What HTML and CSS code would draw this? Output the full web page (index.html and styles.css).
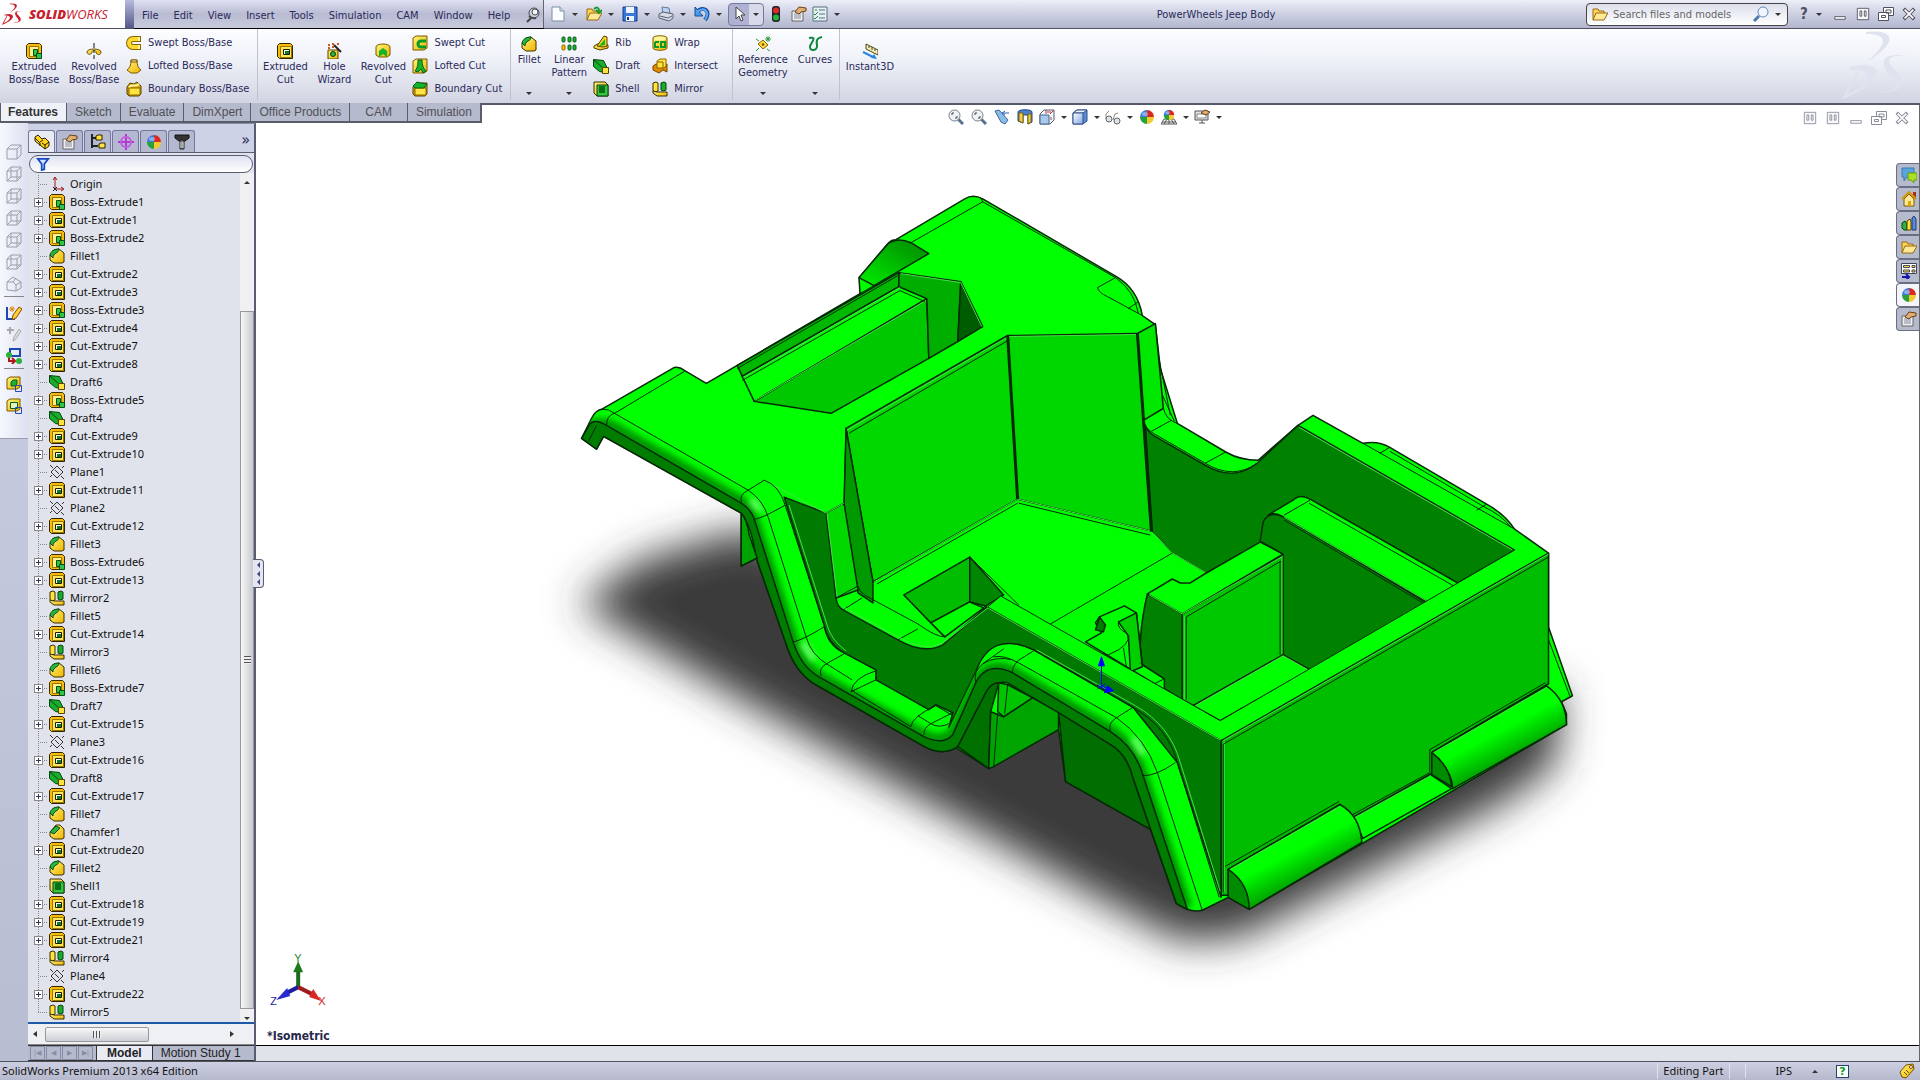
FILE: index.html
```html
<!DOCTYPE html>
<html lang="en">
<head>
<meta charset="utf-8">
<title>PowerWheels Jeep Body</title>
<link rel="stylesheet" href="styles.css">
<script src="tree.js" defer></script>
</head>
<body>
<svg class="defs" aria-hidden="true">
<defs>
<linearGradient id="gold" x1="0" y1="0" x2="1" y2="1"><stop offset="0" stop-color="#fff47a"/><stop offset="1" stop-color="#f0b400"/></linearGradient>
<linearGradient id="glass" x1="0" y1="0" x2="1" y2="1"><stop offset="0" stop-color="#fff"/><stop offset="1" stop-color="#7ea6e0"/></linearGradient>
</defs>
<symbol id="boss" viewBox="0 0 16 16"><path d="M.500 2.500l2-2h11l2 2v11h-2v2h-11l-2-2z" fill="#f4bc10" stroke="#3a2e00"/><path d="M3.500 3.500h9v10h-9z" fill="#fff28a" stroke="#9a7400"/><path d="M7.500 6.500h4v4h4v5h-5v-3h-3z" fill="#2fc44a" stroke="#064d10"/><path d="M10.500 15v-4.500h5" fill="none" stroke="#064d10"/></symbol>
<symbol id="cut" viewBox="0 0 16 16"><path d="M.500 2.500l2-2h11l2 2v13h-13l-2-2z" fill="#f8bc08" stroke="#2e2400"/><path d="M3.500 3.500h11v11h-11z" fill="#ffe75a" stroke="#9a7400"/><path d="M6.500 6.500h6v5h-6z" fill="#fff" stroke="#1a1a00"/><path d="M8 8h4v3H8z" fill="#0a7a24"/></symbol>
<symbol id="fillet" viewBox="0 0 16 16"><path d="M1 7l4-5 5-1 5 4v9l-2 1H5l-4-3z" fill="url(#gold)" stroke="#3a2e00"/><path d="M1 7c1-4 4-6 9-6 0 2-1 3-3 4-2 1-3 3-3 5z" fill="#2ab540" stroke="#064d10"/></symbol>
<symbol id="chamfer" viewBox="0 0 16 16"><path d="M1 8l6-7h4l4 4v9l-2 1H5l-4-3z" fill="url(#gold)" stroke="#3a2e00"/><path d="M1 8l6-6 4 2-6 6z" fill="#2ab540" stroke="#064d10"/></symbol>
<symbol id="draft" viewBox="0 0 16 16"><path d="M.500 1.500l10 1 4 8-3 4-5-1-6-5z" fill="#18ae2c" stroke="#06400e"/><path d="M1 2l9 8" stroke="#06400e"/><path d="M9.500 9.500h6v6h-6z" fill="#ffe23c" stroke="#5a4400"/></symbol>
<symbol id="mirror" viewBox="0 0 16 16"><path d="M1 2l3-1 2 1v8l-3 1-2-1z" fill="#ffe23c" stroke="#3a2e00"/><path d="M9 2l3-1 2 1v7l-3 1-2-1z" fill="#18ae2c" stroke="#06400e"/><path d="M1 10l4 1h10v4H5l-4-3z" fill="url(#gold)" stroke="#3a2e00"/></symbol>
<symbol id="plane" viewBox="0 0 16 16"><path d="M2 8l6-6 6 6-6 6zM1 1l3 3M6 6l4 4M12 12l3 3M1 13l2-2M13 4l2-2" fill="none" stroke="#333"/></symbol>
<symbol id="shell" viewBox="0 0 16 16"><path d="M1 1h11l3 3v11H4l-3-3z" fill="url(#gold)" stroke="#3a2e00"/><path d="M4 4h11v11H4z" fill="#35c640" stroke="#06400e"/><path d="M6 5h6v7H6z" fill="#0b6f18"/></symbol>
<symbol id="origin" viewBox="0 0 16 16"><path d="M6 13V2M4 4l2-3 2 3M6 13h8M12 11l3 2-3 2" fill="none" stroke="#a01818"/><path d="M4 11l4 4M8 11l-4 4" stroke="#222"/></symbol>
<symbol id="revolve" viewBox="0 0 16 16"><path d="M1 9c0-4 14-4 14 0s-5 3-5 0c0-2-4-2-4 0 0 3-5 3-5 0z" fill="url(#gold)" stroke="#6b5200"/><path d="M8 0v5M8 7v3M8 12v4" stroke="#111"/></symbol>
<symbol id="swept" viewBox="0 0 16 16"><path d="M15 4H7a4 4 0 0 0 0 8h8" fill="none" stroke="#8a6400" stroke-width="6"/><path d="M14 4H7a4 4 0 0 0 0 8h7" fill="none" stroke="#ffd92e" stroke-width="4"/><path d="M13 2v4M13 10v4" stroke="#fff6a0" stroke-width="2"/></symbol>
<symbol id="loft" viewBox="0 0 16 16"><path d="M5 2h6c0 5 1 8 4 10l-4 3H5l-4-3c3-2 4-5 4-10z" fill="url(#gold)" stroke="#7a5800"/><path d="M5 2h6v2H5z" fill="#fff6a0" stroke="#7a5800"/></symbol>
<symbol id="bound" viewBox="0 0 16 16"><path d="M1 6l3-4 4 1 3-2 4 4v8l-2 2H3l-2-2z" fill="#d9a200" stroke="#5a4200"/><path d="M3 7h11v7H3z" fill="#ffe542" stroke="#8a6400"/><path d="M3 6c4-4 6 1 10-3" fill="none" stroke="#fff6a0" stroke-width="2"/></symbol>
<symbol id="wizard" viewBox="0 0 16 16"><path d="M2 7h10v9H2z" fill="url(#gold)" stroke="#5a4200"/><circle cx="7" cy="11" r="2.500" fill="#2ab540" stroke="#06400e"/><path d="M8 2l7 7" stroke="#222" stroke-width="2"/><path d="M2 2h2M6 1h2M11 1h2M2 5h2M6 4h2" stroke="#c85a20" stroke-width="2"/></symbol>
<symbol id="revcut" viewBox="0 0 16 16"><path d="M1 4c0-4 14-4 14 0v8l-3 2H4l-3-2z" fill="url(#gold)" stroke="#7a5800"/><path d="M4 14V8l4-3 4 3v6l-4-3z" fill="#14b428"/></symbol>
<symbol id="sweptcut" viewBox="0 0 16 16"><path d="M1 3l3-2h11v12l-3 2H1z" fill="url(#gold)" stroke="#7a5800"/><path d="M14 6H9a2 2 0 0 0 0 6h5" fill="none" stroke="#0a9c24" stroke-width="3"/></symbol>
<symbol id="loftcut" viewBox="0 0 16 16"><path d="M1 3l3-2h11v12l-3 2H1z" fill="url(#gold)" stroke="#7a5800"/><path d="M6 2h4c0 5 1 8 4 11l-3 2-2-4-3 3-3-1c3-4 3-7 3-11z" fill="#14b428" stroke="#06601a"/></symbol>
<symbol id="boundcut" viewBox="0 0 16 16"><path d="M1 6l3-4h11v11l-2 2H3l-2-2z" fill="#d9a200" stroke="#5a4200"/><path d="M3 7h11v7H3z" fill="#ffe542" stroke="#8a6400"/><path d="M1 5l4-4 4 1 6 1-3 4H3z" fill="#14b428" stroke="#06601a"/></symbol>
<symbol id="pattern" viewBox="0 0 16 16"><g stroke="#06601a"><g fill="#1faf35"><rect x="1" y="1" width="3" height="5" rx="1"/><rect x="7" y="1" width="3" height="5" rx="1"/><rect x="12" y="1" width="3" height="5" rx="1"/><rect x="7" y="9" width="3" height="5" rx="1"/><rect x="12" y="9" width="3" height="5" rx="1"/></g><rect x="1" y="9" width="3" height="5" rx="1" fill="#ffc400" stroke="#8a6400"/></g></symbol>
<symbol id="rib" viewBox="0 0 16 16"><path d="M1 11l7-4 7 3v3l-8 2-6-2z" fill="url(#gold)" stroke="#5a4200"/><path d="M4 11L11 1l3 1v9l-4 1z" fill="#ffd21e" stroke="#5a4200"/><path d="M6 11l6-7v6z" fill="#14b428"/></symbol>
<symbol id="wrap" viewBox="0 0 16 16"><path d="M1 3c0-3 14-3 14 0v10c0 3-14 3-14 0z" fill="url(#gold)" stroke="#7a5800"/><ellipse cx="8" cy="3.500" rx="6" ry="2" fill="#fff6a0"/><path d="M3 7h4M3 7v5h4M9 7h4v5H9z" fill="none" stroke="#0a9c24" stroke-width="2"/></symbol>
<symbol id="intersect" viewBox="0 0 16 16"><path d="M1 8l3-2 8 1 3-1v8l-4-2-4 3-6-3z" fill="#e08a00" stroke="#7a4200"/><path d="M5 3l3-2h6v7l-2 2H5z" fill="#ffe542" stroke="#8a6400"/><path d="M5 4h6v6" fill="none" stroke="#8a6400"/></symbol>
<symbol id="refgeo" viewBox="0 0 16 16"><path d="M3 8l5-4 5 5-5 4z" fill="#ffd83a" stroke="#8a6400"/><path d="M7 9l2-1" stroke="#6a4a00" stroke-width="2"/><path d="M1 3l3 2M12 13l3 2M1 15l3-3M13 0v6M10 3h6M11 1l4 4M15 1l-4 4" stroke="#2a9a3a" fill="none"/></symbol>
<symbol id="curves" viewBox="0 0 16 16"><path d="M2 2c9-2 2 5 1 8-1 6 8 5 7-1C9 4 10 2 15 1" fill="none" stroke="#0c8a3c" stroke-width="2"/></symbol>
<symbol id="instant" viewBox="0 0 16 16"><path d="M4 1l12 6v5L4 6z" fill="#f7eeb4" stroke="#4a4420"/><path d="M7 3v2M10 4v3M13 6v2" stroke="#4a4420"/><path d="M1 9l10 5" stroke="#2a86e0" stroke-width="2"/><path d="M9 15l6 1-3-5z" fill="#2a86e0"/></symbol>
<symbol id="new" viewBox="0 0 16 16"><path d="M2 1h8l4 4v10H2z" fill="#fbfdff" stroke="#7890a8"/><path d="M10 1v4h4" fill="#d4e0ec" stroke="#7890a8"/></symbol>
<symbol id="folder" viewBox="0 0 16 16"><path d="M1 14V3h5l1 2h5v2" fill="#ffd35a" stroke="#9a6a10"/><path d="M1 14L4 7h12l-4 7z" fill="#ffe896" stroke="#9a6a10"/></symbol>
<symbol id="open" viewBox="0 0 16 16"><use href="#folder"/><path d="M8 3c3-3 5-1 5 2M10 4l3 3 3-3" fill="none" stroke="#1c9a2c" stroke-width="2"/></symbol>
<symbol id="save" viewBox="0 0 16 16"><path d="M1 1h14v14H1z" fill="#3a78d8" stroke="#123a88"/><path d="M4 1h8v6H4zM4 10h8v5H4z" fill="#eef4ff"/><path d="M6 11v3" stroke="#123a88" stroke-width="2"/></symbol>
<symbol id="print" viewBox="0 0 16 16"><path d="M4 1l7 1 1 5-7 1z" fill="#b8d4f4" stroke="#6a7a94"/><path d="M1 8l4-2 10 2v4l-4 3-10-3z" fill="#d8dae4" stroke="#5a5e70"/><path d="M2 10l8 2 4-2" fill="none" stroke="#5a5e70"/></symbol>
<symbol id="undo" viewBox="0 0 16 16"><path d="M3 6c6-7 15-1 8 8" fill="none" stroke="#1a4a9a" stroke-width="4"/><path d="M1 1v9h8z" fill="#4a9aea" stroke="#1a4a9a"/><path d="M3 6c6-6 14-1 8 8" fill="none" stroke="#5aaaf4" stroke-width="2"/></symbol>
<symbol id="select" viewBox="0 0 16 16"><path d="M5 1v12l3-3 2 5 2-1-2-5h4z" fill="#fff" stroke="#444"/></symbol>
<symbol id="traffic" viewBox="0 0 16 16"><rect x="4" y="0" width="8" height="16" rx="3" fill="#202428"/><circle cx="8" cy="4.500" r="3" fill="#e02a2a"/><circle cx="8" cy="11.500" r="3" fill="#28b43c"/></symbol>
<symbol id="props" viewBox="0 0 16 16"><path d="M1 5h11v10H1z" fill="#eef0f4" stroke="#666"/><path d="M3 8h7M3 10h7M3 12h7" stroke="#889"/><path d="M4 6l4-5 7 1v3l-5 1-2 2z" fill="#e0ae70" stroke="#6a4018"/></symbol>
<symbol id="opts" viewBox="0 0 16 16"><path d="M1 1h14v14H1z" fill="#e4f0f4" stroke="#56707c"/><path d="M7 4h6M7 8h6M7 12h6" stroke="#56707c"/><path d="M3 4h2M2 8l1 1 3-3M2 12l1 1 3-3" stroke="#1c8a3c" fill="none"/></symbol>
<symbol id="pin" viewBox="0 0 16 16"><path d="M2 15l5-5" stroke="#444" stroke-width="2"/><circle cx="9" cy="6" r="5" fill="#ccced6" stroke="#4a4c58"/><circle cx="10" cy="5" r="3" fill="#f4f4f8" stroke="#4a4c58"/><path d="M4 9q3 3 7 2" fill="none" stroke="#4a4c58" stroke-width="2"/></symbol>
<symbol id="zoom" viewBox="0 0 16 16"><path d="M10 10l5 5" stroke="#5a7090" stroke-width="3"/><circle cx="6.500" cy="6.500" r="5.500" fill="#eef2f6" stroke="#777e88"/><path d="M4 6V4h2M9 7v2H7" stroke="#444" fill="none"/></symbol>
<symbol id="lens" viewBox="0 0 16 16"><path d="M1 15l5-5" stroke="#4a7ab0" stroke-width="3"/><circle cx="10" cy="6" r="5" fill="#eef6ff" stroke="#6a8ab0"/></symbol>
<symbol id="prev" viewBox="0 0 16 16"><path d="M1 2l4-1 9 10-3 4-4-2z" fill="#8cbce8" stroke="#3a6a9a"/><path d="M9 4h6M11 2L8 4l3 2" stroke="#2a62aa" fill="none"/></symbol>
<symbol id="section" viewBox="0 0 16 16"><path d="M1 3c0-3 14-3 14 0v10l-4 2V6H6v8l-5-2z" fill="#4a80c8" stroke="#28487a"/><path d="M2 4h4v10l-4-2zM11 5h3v8l-3 2z" fill="#f4d23a" stroke="#7a6210"/></symbol>
<symbol id="orient" viewBox="0 0 16 16"><path d="M5 1h10v10l-4 4H1V5z" fill="#f4f6fa" stroke="#555e70"/><path d="M1 6h9v9H1z" fill="#a8c8ee" stroke="#46648e"/><path d="M11 5l4-4M8 3h4M12 8v3M7 1v4" stroke="#b03a3a"/></symbol>
<symbol id="display" viewBox="0 0 16 16"><path d="M1 4l4-3h10v11l-4 3H1z" fill="#5a8ad8" stroke="#34508a"/><path d="M1 4l4-3h10l-4 3z" fill="#eef4ff" stroke="#34508a"/><path d="M1 4h10v11H1z" fill="url(#glass)" stroke="#34508a"/></symbol>
<symbol id="hide" viewBox="0 0 16 16"><path d="M1 10V5l3-3M8 11l2-6 3-1" fill="none" stroke="#888"/><circle cx="4" cy="10" r="3" fill="#dce4ea" stroke="#666"/><circle cx="12" cy="12" r="3" fill="#dce4ea" stroke="#666"/></symbol>
<symbol id="ball" viewBox="0 0 16 16"><path d="M8 8V1a7 7 0 0 1 7 7z" fill="#d82a24"/><path d="M8 8h7a7 7 0 0 1-7 7z" fill="#f0cc30"/><path d="M8 8v7a7 7 0 0 1-7-7z" fill="#2aa03a"/><path d="M8 8H1a7 7 0 0 1 7-7z" fill="#3a7ae0"/><ellipse cx="6" cy="5" rx="3" ry="2" fill="#fff" opacity=".4"/></symbol>
<symbol id="scene" viewBox="0 0 16 16"><path d="M0 15l3-5h10l3 5z" fill="#fff" stroke="#555"/><path d="M3 15l3-5M8 15v-5M13 15l-3-5M1 13h14" stroke="#555"/><svg x="2" y="0" width="12" height="12" viewBox="0 0 16 16"><use href="#ball"/></svg></symbol>
<symbol id="monitor" viewBox="0 0 16 16"><path d="M1 2h13v9H1zM5 14h6M8 11v3" fill="#dfe4ea" stroke="#555"/><path d="M3 5h9v4H3z" fill="#fff" stroke="#888"/><path d="M7 4l4-3 5 2-4 3z" fill="#e0ae70" stroke="#6a4018"/></symbol>
<symbol id="part" viewBox="0 0 16 16"><path d="M1 3l3-2 4 4 3-1 4 4v4l-4 3L1 7z" fill="#ffd21e" stroke="#2a2200"/><path d="M1 4l5 5v3M6 8l3-2M11 15v-4l4-3M8 9l3 2" fill="none" stroke="#2a2200"/></symbol>
<symbol id="config" viewBox="0 0 16 16"><path d="M2 0v14M2 4h4M2 12h6" stroke="#222" fill="none" stroke-width="2"/><path d="M6 2l2-1h4v5H6zM9 10l2-1h4v5H9z" fill="#ffe23c" stroke="#2a2200"/></symbol>
<symbol id="target" viewBox="0 0 16 16"><path d="M8 0v16M0 8h16" stroke="#b03ad0" stroke-width="2"/><circle cx="8" cy="8" r="5" fill="none" stroke="#c25ae0" stroke-width="2"/></symbol>
<symbol id="bolt" viewBox="0 0 16 16"><path d="M1 1h14v3l-4 3H5L1 4z" fill="#333" stroke="#111"/><path d="M6 6h4v9H6z" fill="#777" stroke="#222"/><path d="M6 9h4M6 11h4M6 13h4" stroke="#ddd"/></symbol>
<symbol id="funnel" viewBox="0 0 16 16"><path d="M2 2h12L9.500 8v6l-3 1V8z" fill="#cfe2fa" stroke="#1848c0" stroke-width="2"/></symbol>
<symbol id="cube" viewBox="0 0 16 16"><path d="M1 5l4-4h10v10l-4 4H1zM1 5h10v10M11 5l4-4" fill="none" stroke="#9a9ea8"/></symbol>
<symbol id="wire" viewBox="0 0 16 16"><path d="M1 5l4-4h10v10l-4 4H1zM1 5h10v10M11 5l4-4M5 1v10h10M5 11l-4 4" fill="none" stroke="#9a9ea8"/></symbol>
<symbol id="iso" viewBox="0 0 16 16"><path d="M1 6l6-5 8 5v6l-5 3-9-1zM1 6h6l3 3v6M7 6l3-4M10 9l5-3" fill="none" stroke="#9a9ea8"/></symbol>
<symbol id="sketch" viewBox="0 0 16 16"><path d="M1 3v12h8" fill="none" stroke="#1c48b4" stroke-width="2"/><path d="M13 3l3 2-6 9-4 2 1-5z" fill="#ffd23a" stroke="#8a4a00"/><path d="M3 5h6M6 2v6M4 3l4 4M8 3L4 7" stroke="#e08a1a"/></symbol>
<symbol id="sketch3" viewBox="0 0 16 16"><path d="M1 4h7M4 1v7" stroke="#aaa" stroke-width="2"/><path d="M13 3l2 2-6 9-2 1 1-4z" fill="#ddd" stroke="#aaa"/></symbol>
<symbol id="route" viewBox="0 0 16 16"><path d="M4 1h10v7H4z" fill="none" stroke="#1c48b4" stroke-width="2"/><path d="M3 8v5h5M6 10l3 3-3 3" stroke="#b01818" stroke-width="2" fill="none"/><circle cx="3" cy="7" r="3" fill="#28b43c"/><circle cx="13" cy="13" r="3" fill="#28b43c"/></symbol>
<symbol id="bosscopy" viewBox="0 0 16 16"><path d="M1 3l3-2h10v10l-3 2H1z" fill="url(#gold)" stroke="#7a5800"/><path d="M5 6l2-2h4v4L9 10H5z" fill="#1faf35" stroke="#06601a"/><path d="M9.500 9.500h6v6h-6z" fill="none" stroke="#2848b4"/></symbol>
<symbol id="cutcopy" viewBox="0 0 16 16"><path d="M1 3l3-2h10v10l-3 2H1z" fill="url(#gold)" stroke="#7a5800"/><path d="M4.500 4.500h7v6h-7z" fill="#dff4c0" stroke="#06601a"/><path d="M9.500 9.500h6v6h-6z" fill="none" stroke="#2848b4"/></symbol>
<symbol id="talk" viewBox="0 0 16 16"><path d="M1 1h12v9H6l-3 4v-4H1z" fill="#5aa4dc" stroke="#3a7ab0"/><path d="M7 6h9v7h-3v3l-3-3H7z" fill="#a8e024" stroke="#6a9a10"/></symbol>
<symbol id="home" viewBox="0 0 16 16"><path d="M12 1h3v6h-3z" fill="#b02a20"/><path d="M3 8l5-5 5 5v7H3z" fill="#ffe896" stroke="#7a5800"/><path d="M1 8l7-7 7 7" fill="none" stroke="#d09a10" stroke-width="2"/><path d="M7 10h3v5H7z" fill="#e0a800"/></symbol>
<symbol id="books" viewBox="0 0 16 16"><path d="M1 8l3-2 2 3v6H3l-2-2z" fill="#2ab540" stroke="#06400e"/><path d="M6 6l3-2 1 3v8H6z" fill="#ffe23c" stroke="#5a4400"/><path d="M11 3l2-2 2 3v11h-4z" fill="#5a8ad8" stroke="#203a7a"/></symbol>
<symbol id="palette" viewBox="0 0 16 16"><path d="M.500.500h15v10H.500z" fill="#fff" stroke="#445"/><path d="M2.500 2.500h6v2h-6zM11 2.500h3v2h-3zM2.500 7h6v2h-6zM11 7h3v2h-3z" fill="#ffe23c" stroke="#445"/><path d="M1 14h6M5 11l3 3-3 3" stroke="#1818b0" stroke-width="2" fill="none"/></symbol>
<symbol id="min" viewBox="0 0 16 16"><path d="M2 11h12v3H2z" fill="#fff" stroke="currentColor"/></symbol>
<symbol id="pane" viewBox="0 0 16 16"><path d="M1.500 1.500h13v13h-13z" fill="#f8f8fc" stroke="currentColor"/><path d="M4.500 4.500h2v6h-2zM9.500 4.500h2v6h-2z" fill="none" stroke="currentColor"/></symbol>
<symbol id="restore" viewBox="0 0 16 16"><path d="M5.500 1.500h10v8h-10z" fill="#fff" stroke="currentColor"/><path d="M8 4h5v3H8zM.500 6.500h10v8H.500z" fill="#fff" stroke="currentColor"/><path d="M3.500 9.500h4v2h-4z" fill="none" stroke="currentColor"/></symbol>
<symbol id="close" viewBox="0 0 16 16"><path d="M2 2l12 12M14 2L2 14" stroke="currentColor" stroke-width="4"/><path d="M3 3l10 10M13 3L3 13" stroke="#fff" stroke-width="2"/></symbol>
<symbol id="tag" viewBox="0 0 16 16"><path d="M1 9l6-7 7-1 1 5-8 9-4-1z" fill="url(#gold)" stroke="#7a5000"/><circle cx="12" cy="4" r="1.500" fill="#fff" stroke="#7a5000"/><path d="M5 9l3 3M7 7l3 3" stroke="#7a5000"/></symbol>
<symbol id="ds" viewBox="0 0 70 70"><path d="M24 2c24-3 36 7 4 28l-2 1c22-20 18-27-2-27zM8 37c34-8 37 12 2 28-6 3-8 4-10 4l14-27 3-1-11 23c26-12 24-26 2-24zM69 27c-26-4-26 4-15 14 12 12 6 24-21 21 26 0 22-7 14-17-10-13-8-24 22-18z" fill="currentColor"/></symbol>
</svg>

<header class="titlebar">
  <div class="brand"><svg class="ds"><use href="#ds"/></svg><b>SOLID</b><span>WORKS</span></div>
  <div class="fold"></div>
  <nav class="menu">
    <a href="#">File</a><a href="#">Edit</a><a href="#">View</a><a href="#">Insert</a><a href="#">Tools</a><a href="#">Simulation</a><a href="#">CAM</a><a href="#">Window</a><a href="#">Help</a>
    <button class="flat" aria-label="Pin menu"><svg class="ic"><use href="#pin"/></svg></button>
  </nav>
  <div class="quick">
    <button class="drop" aria-label="New"><svg class="ic"><use href="#new"/></svg><i></i></button>
    <button class="drop" aria-label="Open"><svg class="ic"><use href="#open"/></svg><i></i></button>
    <button class="drop" aria-label="Save"><svg class="ic"><use href="#save"/></svg><i></i></button>
    <button class="drop" aria-label="Print"><svg class="ic"><use href="#print"/></svg><i></i></button>
    <button class="drop" aria-label="Undo"><svg class="ic"><use href="#undo"/></svg><i></i></button>
    <button class="drop active" aria-label="Select"><svg class="ic"><use href="#select"/></svg><i></i></button>
    <button class="flat" aria-label="Rebuild"><svg class="ic"><use href="#traffic"/></svg></button>
    <button class="flat" aria-label="File properties"><svg class="ic"><use href="#props"/></svg></button>
    <button class="drop" aria-label="Options"><svg class="ic"><use href="#opts"/></svg><i></i></button>
  </div>
  <h1>PowerWheels Jeep Body</h1>
  <div class="search"><svg class="ic"><use href="#folder"/></svg><input type="text" placeholder="Search files and models" aria-label="Search files and models"><button class="drop" aria-label="Search"><svg class="ic"><use href="#lens"/></svg><i></i></button></div>
  <div class="wintools">
    <button class="drop help" aria-label="Help"><b>?</b><i></i></button>
    <button class="flat" aria-label="Minimize"><svg class="sm"><use href="#min"/></svg></button>
    <button class="flat" aria-label="Panes"><svg class="sm"><use href="#pane"/></svg></button>
    <button class="flat" aria-label="Restore"><svg class="ic"><use href="#restore"/></svg></button>
    <button class="flat" aria-label="Close"><svg class="sm"><use href="#close"/></svg></button>
  </div>
</header>

<section class="ribbon">
  <div class="group">
    <button class="big w60"><svg class="ic"><use href="#boss"/></svg>Extruded<br>Boss/Base</button>
    <button class="big w60"><svg class="ic"><use href="#revolve"/></svg>Revolved<br>Boss/Base</button>
    <div class="stack"><button><svg class="ic"><use href="#swept"/></svg>Swept Boss/Base</button><button><svg class="ic"><use href="#loft"/></svg>Lofted Boss/Base</button><button><svg class="ic"><use href="#bound"/></svg>Boundary Boss/Base</button></div>
  </div>
  <div class="group">
    <button class="big w54"><svg class="ic"><use href="#cut"/></svg>Extruded<br>Cut</button>
    <button class="big w44"><svg class="ic"><use href="#wizard"/></svg>Hole<br>Wizard</button>
    <button class="big w54"><svg class="ic"><use href="#revcut"/></svg>Revolved<br>Cut</button>
    <div class="stack"><button><svg class="ic"><use href="#sweptcut"/></svg>Swept Cut</button><button><svg class="ic"><use href="#loftcut"/></svg>Lofted Cut</button><button><svg class="ic"><use href="#boundcut"/></svg>Boundary Cut</button></div>
  </div>
  <div class="group wide">
    <button class="big up w36"><svg class="ic"><use href="#fillet"/></svg>Fillet<i></i></button>
    <button class="big up w44"><svg class="ic"><use href="#pattern"/></svg>Linear<br>Pattern<i></i></button>
    <div class="stack"><button><svg class="ic"><use href="#rib"/></svg>Rib</button><button><svg class="ic"><use href="#draft"/></svg>Draft</button><button><svg class="ic"><use href="#shell"/></svg>Shell</button></div>
    <div class="stack"><button><svg class="ic"><use href="#wrap"/></svg>Wrap</button><button><svg class="ic"><use href="#intersect"/></svg>Intersect</button><button><svg class="ic"><use href="#mirror"/></svg>Mirror</button></div>
  </div>
  <div class="group tight">
    <button class="big up w60"><svg class="ic"><use href="#refgeo"/></svg>Reference<br>Geometry<i></i></button>
    <button class="big up w44"><svg class="ic"><use href="#curves"/></svg>Curves<i></i></button>
  </div>
  <div class="group last">
    <button class="big w60"><svg class="ic"><use href="#instant"/></svg>Instant3D</button>
  </div>
  <svg class="watermark"><use href="#ds"/></svg>
</section>

<main class="work">
  <aside class="left">
    <nav class="tabs"><a class="on" href="#">Features</a><a href="#">Sketch</a><a href="#">Evaluate</a><a href="#">DimXpert</a><a href="#">Office Products</a><a href="#">CAM</a><a href="#">Simulation</a></nav>
    <div class="side">
      <div class="views">
        <button aria-label="Front"><svg class="ic"><use href="#cube"/></svg></button><button aria-label="Back"><svg class="ic"><use href="#wire"/></svg></button><button aria-label="Left"><svg class="ic"><use href="#wire"/></svg></button><button aria-label="Right"><svg class="ic"><use href="#wire"/></svg></button><button aria-label="Top"><svg class="ic"><use href="#wire"/></svg></button><button aria-label="Bottom"><svg class="ic"><use href="#wire"/></svg></button><button aria-label="Isometric"><svg class="ic"><use href="#iso"/></svg></button>
        <hr>
        <button aria-label="Sketch"><svg class="ic"><use href="#sketch"/></svg></button><button aria-label="3D sketch"><svg class="ic"><use href="#sketch3"/></svg></button><button aria-label="Route"><svg class="ic"><use href="#route"/></svg></button>
        <hr>
        <button aria-label="Boss"><svg class="ic"><use href="#bosscopy"/></svg></button><button aria-label="Cut"><svg class="ic"><use href="#cutcopy"/></svg></button>
      </div>
      <div class="panel">
        <div class="ptabs">
          <button class="on" aria-label="Feature manager"><svg class="ic"><use href="#part"/></svg></button><button aria-label="Property manager"><svg class="ic"><use href="#props"/></svg></button><button aria-label="Configurations"><svg class="ic"><use href="#config"/></svg></button><button aria-label="DimXpert"><svg class="ic"><use href="#target"/></svg></button><button aria-label="Appearances"><svg class="ic"><use href="#ball"/></svg></button><button aria-label="Fasteners"><svg class="ic"><use href="#bolt"/></svg></button>
          <span class="more">»</span>
        </div>
        <div class="filter"><svg><use href="#funnel"/></svg><input type="text" aria-label="Filter tree"></div>
        <div class="treebox">
          <ul class="tree" id="tree"></ul>
          <div class="vscroll"><i class="up"></i><div class="thumb"><span></span></div><i></i></div>
        </div>
        <div class="hscroll"><i class="lt"></i><div class="thumb"><span></span></div><i class="rt"></i></div>
        <div class="sheets"><button class="nav">|◀</button><button class="nav">◀</button><button class="nav">▶</button><button class="nav">▶|</button><a class="on" href="#">Model</a><a href="#">Motion Study 1</a></div>
        <button class="grip" aria-label="Collapse panel"><i></i><i></i><i></i></button>
      </div>
    </div>
  </aside>

  <section class="view">
    <div class="canvas">
      <svg viewBox="256 104 1662 942" role="img" aria-label="Jeep body model">
        <defs>
          <filter id="soft" x="-20%" y="-30%" width="140%" height="160%"><feGaussianBlur stdDeviation="21"/></filter>
          <filter id="shade" x="-10%" y="-10%" width="120%" height="120%"><feGaussianBlur stdDeviation="3"/></filter>
          <linearGradient id="arch" x1="0" y1="1" x2="1" y2="0"><stop offset="0" stop-color="#00f000"/><stop offset=".7" stop-color="#00a400"/><stop offset="1" stop-color="#008c00"/></linearGradient>
          <linearGradient id="bump" gradientUnits="userSpaceOnUse" x1="1490" y1="715" x2="1512" y2="757"><stop offset="0" stop-color="#0f0"/><stop offset=".4" stop-color="#0f0"/><stop offset="1" stop-color="#00a800"/></linearGradient>
          <linearGradient id="bump2" gradientUnits="userSpaceOnUse" x1="1285" y1="835" x2="1307" y2="877"><stop offset="0" stop-color="#0f0"/><stop offset=".4" stop-color="#0f0"/><stop offset="1" stop-color="#00a800"/></linearGradient>
          <clipPath id="tube"><path d="M580 438L590 418Q594 410 600 409L673 367 740 400 763 480Q778 485 784 505L823 625Q830 645 843 653L875 670 935 705 948 728 975 672Q990 648 1017 644L1033 650 1133 708Q1168 728 1177 763L1221 898 1193 912 1176 904 1133 780 1110 740 1000 680 940 755 807 685 740 513 602 436z"/></clipPath>
        </defs>
        <path filter="url(#soft)" fill="#3a3a3a" d="M578 604L640 560 740 530 1300 700 1562 690 1556 765 1500 805 1240 938 1180 942 1100 900 740 700z"/>
        <g class="edge">
          <path fill="#0f0" d="M895 239L964 198Q972 193 982 198L1116 276Q1137 288 1142 315L1155 324 1160 368 1177 423 1226 452Q1240 460 1258 460L1298 425 1313 415 1363 443Q1378 440 1390 447L1487 504Q1505 514 1515 529L1549 553V627L1573 696 1562 702 1567 714V725L1249 910 1228 898 1202 911Q1190 914 1176 904L1150 830 1065 782 1058 730 988 769 955 748Q938 757 920 745L820 688Q797 677 787 650L755 558 740 566V513L602 436 595 449 580 438 590 418Q594 410 600 409L673 367Q678 366 683 370L705 383 736 365 859 293 858 277 887 243Q890 239 895 239z"/>
          <path fill="url(#arch)" d="M858 277L887 243Q897 236 910 242L928 253 873 285z"/>
          <path class="line" d="M859 293L873 285M910 242L982 201 1115 277M982 201L980 197M1115 277L1097 287Q1098 292 1107 296L1142 315M1115 277Q1134 290 1138 313M1128 308L1138 301M1157 350L1170 415M1160 390L1174 421"/>
          <path fill="#00b800" d="M736 365L898 272V286L741 376z"/>
          <path fill="#0f0" d="M741 376L898 286 926 298 753 401z"/>
          <path fill="#00c800" d="M753 401L926 298 928 358 830 413z"/>
          <path fill="#00ae00" d="M898 272L960 281 957 341 928 358 926 298 898 286z"/>
          <path fill="#005c00" d="M960 281L982 326 957 341z"/>
          <path class="hi" d="M900 273L960 282 981 326M742 377L899 287M754 400L925 300"/>
          <path class="line" d="M736 368L897 275M741 380L899 290 924 301"/>
          <path fill="#00e800" d="M1137 333L1155 323 1163 408 1143 420z"/>
          <path class="line" d="M1143 420L1163 408Q1166 420 1177 423M1151 431L1171 420M1205 463L1225 452M1143 420Q1144 427 1153 433L1205 463Q1233 480 1257 463"/>
          <path fill="#008200" d="M1145 425Q1146 430 1153 435L1205 465Q1233 482 1257 463L1298 425 1515 550 1220 721 1090 640 1172 553 1152 532z"/>
          <path class="hi" d="M1299 427L1513 550"/>
          <path class="line" d="M1363 443L1492 516 1515 529M1380 453L1390 447M1477 510L1487 504M1390 451L1485 507Q1502 515 1511 527M1549 640L1571 698"/>
          <path fill="#0f0" stroke="none" d="M1152 532L1172 553 1206 573 1130 660 1050 660 985 608 872 582 1017 499z"/>
          <path class="line" d="M1152 532L1172 553 1206 573M1172 553L1050 624"/>
          <path fill="#00d800" d="M845 428L1007 335 1017 499 872 582z"/>
          <path fill="#00d600" d="M1007 335L1137 333 1151 531 1017 499z"/>
          <path class="hi" d="M846 430L1008 336 1137 334M873 582L1017 499 1151 531M1152 532L1172 553 1206 573"/>
          <path class="line" d="M848 433L1009 339M1018 503L1150 535M876 584L1017 503"/>
          <path class="thick" d="M1007 335L1017 499M1137 333L1151 531"/>
          <path fill="#009a00" d="M845 428L872 582V603L857 593 843 505z"/>
          <path fill="#00d800" d="M825 513L843 503 857 590 835 598z"/>
          <path class="line" d="M835 598L857 586Q858 592 865 596L917 624Q935 637 944 637L985 606M842 610L861 598M897 640L917 629"/>
          <path fill="#00bd00" d="M903 595L969 557V602L930 623z"/>
          <path fill="#008600" d="M969 557L1003 595 985 606 969 602z"/>
          <path fill="#0f0" d="M930 623L969 602 983 608 944 637z"/>
          <path class="line" d="M969 557L1018 605M903 595L944 637"/>
          <path fill="#008200" d="M1147 594L1182 614V700L1142 675Q1136 640 1147 594z"/>
          <path fill="#00c800" d="M1182 614L1283 555V655L1193 706 1182 700z"/>
          <path fill="#0f0" d="M1147 594L1172 579 1180 583H1190L1206 573 1260 542 1283 554 1182 614z"/>
          <path fill="#008200" d="M1260 541L1263 522Q1268 511 1282 516L1427 603 1310 670 1283 655V554z"/>
          <path fill="#0f0" d="M1268 515L1293 500Q1300 493 1310 499L1460 584 1428 602 1282 516Q1274 512 1268 515z"/>
          <path class="line" d="M1284 515L1310 500M1309 503L1454 586M1284 520L1423 603"/>
          <path fill="#0f0" d="M1193 706L1283 655 1310 670 1220 721z"/>
          <path class="hi" d="M1149 595L1182 614 1283 556M1284 517L1427 601M1184 616V700M1282 557V654M1195 706L1283 656 1308 670"/>
          <path class="line" d="M1186 617L1281 561M1186 617V700M1280 561V655"/>
          <path fill="#0f0" d="M1085 642L1101 633 1095 623 1099 617 1124 606 1136 613 1142 665 1164 679V690z"/>
          <path fill="#007a00" d="M1095 630L1099 617 1105 625 1103 632z"/>
          <path fill="#00d000" d="M1118 622L1136 613 1142 667 1130 672 1128 636z"/>
          <path class="line" d="M1118 622Q1116 628 1127 634 1132 645 1108 655L1092 652M1123 648L1126 667M1140 663L1164 679 1154 684"/>
          <path fill="#0f0" stroke="none" d="M987 607L1000 596 1220 721 1515 550 1549 553 1221 741z"/>
          <path class="line" d="M987 607L1000 596 1220 721 1515 550"/>
          <path fill="#007a00" d="M783 497L825 513 835 598Q836 607 842 610L897 640Q923 655 942 645L986 607 1221 741V898L1177 763 1133 708 1033 650Q990 630 975 672L948 728 952 713 935 705 928 710 875 680V670L843 653Q826 645 823 625z"/>
          <path class="hi" d="M842 607L897 637Q923 653 942 643L987 608 1221 741M826 514L836 597M765 481L825 513 843 503"/>
          <path class="line" d="M843 503L845 428"/>
          <path fill="#00bd00" d="M1221 741L1549 553V684L1433 752V773L1353 818 1340 805 1228 870V896H1221z"/>
          <path class="hi" d="M1223 741L1549 554M1224 742V893"/>
          <path class="line" d="M1224 744L1549 557M1223 744V893"/>
          <path fill="url(#bump)" d="M1432 753L1547 686Q1567 700 1567 725L1453 789Q1452 770 1432 753z"/>
          <path fill="#008c00" d="M1432 753Q1450 766 1452 787L1432 775z"/>
          <path fill="#0f0" d="M1353 818L1431 775 1452 789 1363 839z"/>
          <path fill="url(#bump2)" d="M1228 870L1340 805Q1360 816 1362 843L1249 910z"/>
          <path fill="#008c00" d="M1228 870Q1249 884 1249 910L1228 898z"/>
          <path class="hi" d="M1230 870L1340 807M1434 753L1547 688M1355 818L1431 776"/>
          <path class="line" d="M1225 867L1339 802M1430 750L1546 683M1430 750V773L1353 815"/>
          <g clip-path="url(#tube)"><path class="tubeshade" filter="url(#shade)" d="M583 430Q590 420 608 424L740 501Q750 510 754 522L793 642Q800 665 820 677L923 735Q940 744 952 733L975 683Q986 660 1012 671L1110 730Q1135 748 1143 777L1187 908"/></g>
          <path class="glare" filter="url(#shade)" d="M750 500L759 510M801 643L813 660M1133 738L1143 755"/>
          <path fill="#007d00" d="M595 449L580 438 588 424Q593 418 605 425L740 503Q751 510 754 522L792 642Q800 667 818 677L923 737Q942 746 952 735L975 683Q986 661 1012 673L1110 732Q1135 748 1143 777L1187 910 1176 904 1133 780Q1127 755 1110 745L1007 683Q993 680 983 697L957 747Q941 758 920 745L820 688Q797 677 787 650L755 558Q750 525 740 513L602 436z"/>
          <path fill="#00a400" d="M740 513Q746 520 748 535L756 558 740 566z"/>
          <path fill="#007000" d="M957 747L983 697Q989 683 998 683L990 712 988 769z"/>
          <path fill="#00a400" d="M990 712L1003 717 1032 698 1058 713V730L993 767 988 769z"/>
          <path fill="#00c400" d="M998 683L1007 685 1032 698 1003 717 997 712z"/>
          <path class="line" d="M1007 685L1004 714M997 713L993 767M587 441L595 425"/>
          <path fill="#006e00" d="M1058 713L1110 745Q1127 755 1133 780L1150 830 1065 782z"/>
          <path class="line" d="M613 413L747 490Q762 500 767 517L805 637Q810 655 827 665L851 680M613 413L683 371M613 413Q605 415 605 425M600 409Q607 408 613 413M747 490L763 480Q778 485 784 505L823 625Q827 643 843 653L875 670V680L850 692M747 490Q738 494 740 502M752 519Q758 520 784 505M792 642Q800 641 823 627M820 676Q817 668 827 663L843 654M850 692Q852 678 875 671M851 691L910 727Q911 717 935 706L952 716M917 716L930 724 952 713M923 735Q923 728 930 724Q938 729 948 724M975 683Q972 672 982 664 995 656 1012 660M982 664L1003 649M1012 673Q1011 668 1017 661L1033 651M993 657Q1003 655 1018 663L1116 718Q1145 738 1157 773L1202 911M1017 644L1033 650 1133 708Q1168 728 1177 763L1219 898M1110 731Q1107 724 1116 718L1132 708M1142 776Q1155 777 1175 763"/>
          <path class="hi" d="M788 505L826 625Q830 640 845 651M1036 650L1135 706Q1170 726 1180 763L1220 892"/>
        </g>
        <g class="origin"><path d="M1101 686V664M1097 685l8 5M1105 684l-8 5M1101 686l10 5"/><path d="M1098 666l3-9 3 9zM1107 686l6 5-9 2z"/></g>
        <g class="triad"><path d="M296 988V970" stroke="#1c6a1c"/><path d="M291 973l5-11 5 11z" fill="#1c7a1c"/><path d="M296 988L282 995" stroke="#1c1ca0"/><path d="M285 989l3 8-14 4z" fill="#2828d0"/><path d="M296 988L310 995" stroke="#a01c1c"/><path d="M307 998l4-8 8 12z" fill="#d82828"/><text x="292" y="963" fill="#1c8a1c">Y</text><text x="268" y="1006" fill="#1c1ca0">Z</text><text x="316" y="1006" fill="#c81c1c">X</text></g>
      </svg>
      <div class="heads">
        <button class="flat" aria-label="Zoom to fit"><svg class="ic"><use href="#zoom"/></svg></button><button class="flat" aria-label="Zoom to area"><svg class="ic"><use href="#zoom"/></svg></button><button class="flat" aria-label="Previous view"><svg class="ic"><use href="#prev"/></svg></button><button class="flat" aria-label="Section view"><svg class="ic"><use href="#section"/></svg></button><button class="drop" aria-label="View orientation"><svg class="ic"><use href="#orient"/></svg><i></i></button><button class="drop" aria-label="Display style"><svg class="ic"><use href="#display"/></svg><i></i></button><button class="drop" aria-label="Hide items"><svg class="ic"><use href="#hide"/></svg><i></i></button><button class="flat" aria-label="Edit appearance"><svg class="ic"><use href="#ball"/></svg></button><button class="drop" aria-label="Apply scene"><svg class="ic"><use href="#scene"/></svg><i></i></button><button class="drop" aria-label="View settings"><svg class="ic"><use href="#monitor"/></svg><i></i></button>
      </div>
      <div class="doctools">
        <button class="flat" aria-label="Left pane"><svg class="sm"><use href="#pane"/></svg></button><button class="flat" aria-label="Right pane"><svg class="sm"><use href="#pane"/></svg></button><button class="flat" aria-label="Minimize document"><svg class="sm"><use href="#min"/></svg></button><button class="flat" aria-label="Restore document"><svg class="ic"><use href="#restore"/></svg></button><button class="flat" aria-label="Close document"><svg class="sm"><use href="#close"/></svg></button>
      </div>
      <div class="taskpane">
        <button aria-label="Forum"><svg class="ic"><use href="#talk"/></svg></button><button aria-label="Resources"><svg class="ic"><use href="#home"/></svg></button><button aria-label="Design library"><svg class="ic"><use href="#books"/></svg></button><button aria-label="File explorer"><svg class="ic"><use href="#folder"/></svg></button><button aria-label="View palette"><svg class="ic"><use href="#palette"/></svg></button><button class="on" aria-label="Appearances"><svg class="ic"><use href="#ball"/></svg></button><button aria-label="Custom properties"><svg class="ic"><use href="#props"/></svg></button>
      </div>
      <p class="viewname">*Isometric</p>
    </div>
    <div class="strip"></div>
  </section>
</main>

<footer class="status">
  <span>SolidWorks Premium 2013 x64 Edition</span>
  <span class="cell">Editing Part</span><span class="gap"></span><span class="ips">IPS</span><i class="up"></i>
  <button class="q" aria-label="Quick tips">?</button>
  <svg class="ic"><use href="#tag"/></svg>
</footer>
</body>
</html>
```
FILE: tree.js
```js
// Feature history: one entry per node, in build order.
const features = `Origin Boss-Extrude1 Cut-Extrude1 Boss-Extrude2 Fillet1 Cut-Extrude2 Cut-Extrude3
Boss-Extrude3 Cut-Extrude4 Cut-Extrude7 Cut-Extrude8 Draft6 Boss-Extrude5 Draft4 Cut-Extrude9
Cut-Extrude10 Plane1 Cut-Extrude11 Plane2 Cut-Extrude12 Fillet3 Boss-Extrude6 Cut-Extrude13
Mirror2 Fillet5 Cut-Extrude14 Mirror3 Fillet6 Boss-Extrude7 Draft7 Cut-Extrude15 Plane3
Cut-Extrude16 Draft8 Cut-Extrude17 Fillet7 Chamfer1 Cut-Extrude20 Fillet2 Shell1 Cut-Extrude18
Cut-Extrude19 Cut-Extrude21 Mirror4 Plane4 Cut-Extrude22 Mirror5`.split(/\s+/);

document.getElementById('tree').innerHTML = features.map(name => {
  const icon = name.match(/^[A-Za-z]+/)[0].toLowerCase();
  const box = name.includes('Extrude') ? '<button class="plus" aria-label="Expand"></button>' : '';
  return `<li><span class="twig">${box}</span><svg class="ic"><use href="#${icon}"/></svg>${name}</li>`;
}).join('');
```
FILE: styles.css
```css
* { box-sizing: border-box; }
html, body { height: 100%; }
body { margin: 0; display: flex; flex-direction: column; overflow: hidden; background: #fff; color: #2a2a5a; font: 11px/13px "DejaVu Sans Condensed", "Noto Sans", sans-serif; }
button, input { font: inherit; color: inherit; background: none; border: 0; padding: 0; margin: 0; }
a { color: inherit; text-decoration: none; }
.defs { position: absolute; width: 0; height: 0; }
.ic { width: 16px; height: 16px; flex: none; display: block; }
.sm { width: 14px; height: 14px; flex: none; display: block; }
.flat { display: flex; align-items: center; justify-content: center; width: 23px; }
.drop { display: flex; align-items: center; width: 36px; padding-left: 2px; gap: 6px; }
i { flex: none; width: 0; height: 0; border: 3px solid transparent; border-top: 3px solid #333; border-bottom: 0; }
i.up { border-top: 0; border-bottom: 3px solid #333; }

.titlebar { flex: none; display: flex; height: 29px; border-bottom: 1px solid #50505e; background: linear-gradient(#eceef8, #d0d3e4 45%, #b2b6ce); }
.brand { width: 125px; padding-left: 2px; display: flex; align-items: center; background: #fff; color: #c8202c; font: italic 13px/16px "Open Sans", "Noto Sans", sans-serif; }
.brand b { font-weight: 900; margin-left: 5px; }
.ds { width: 22px; height: 22px; }
.fold { width: 9px; background: linear-gradient(#b8badc, #54588a); }
.menu { display: flex; align-items: center; width: 410px; padding: 2px 0 0 8px; gap: 15px; border-right: 1px solid #666; background: linear-gradient(#dfe1f2, #b8bbd2 50%, #c9cbdc); box-shadow: 0 1px #000; }
.menu .flat { width: 16px; }
.quick { display: flex; align-items: center; padding-left: 4px; }
.quick .drop, .quick .flat { height: 23px; }
.quick .active { border: 1px solid #74789a; border-radius: 4px; background: linear-gradient(90deg, #b0b2d4 60%, #d8daea 60%); }
.titlebar h1 { flex: 1; margin: 0; text-align: center; font: inherit; line-height: 30px; }
.search { display: flex; align-items: center; align-self: center; width: 202px; height: 23px; padding-left: 5px; gap: 5px; border: 1px solid #444; border-radius: 4px; background: linear-gradient(#dcdfec, #fff); }
.search input { flex: 1; min-width: 0; }
.search input::placeholder { color: #666; opacity: 1; }
.wintools { display: flex; align-items: center; padding: 0 0 0 10px; color: #50505e; }
.help { width: 30px; gap: 8px; }
.help b { font-size: 15px; }

.ribbon { flex: none; display: flex; height: 76px; padding-left: 4px; border-bottom: 2px solid #55576a; background: linear-gradient(#fcfdff, #f0f2f9 40%, #d2d4e2); }
.group { display: flex; padding-right: 6px; margin-bottom: 3px; border-right: 1px solid #c0c2d0; }
.group.wide { padding-right: 12px; }
.group.tight { padding-right: 2px; }
.group.last { border: 0; }
.big { display: flex; flex-direction: column; align-items: center; padding-top: 14px; text-align: center; }
.big .ic { margin-bottom: 1px; }
.big.up { padding-top: 7px; padding-bottom: 5px; }
.big.up i { margin-top: auto; }
.w60 { width: 60px; } .w54 { width: 54px; } .w44 { width: 44px; } .w36 { width: 36px; }
.stack { display: flex; flex-direction: column; padding: 2px 2px 0; }
.stack + .stack { margin-left: 8px; }
.stack button { display: flex; align-items: center; gap: 6px; height: 23px; }
.watermark { width: 70px; height: 70px; margin: 1px 8px 0 auto; color: #dfe3ef; }

.work { flex: 1; min-height: 0; display: flex; }
.left { flex: none; width: 256px; display: flex; flex-direction: column; }
.tabs { position: relative; z-index: 2; flex: none; display: flex; width: max-content; height: 20px; margin-top: -2px; border: solid #5a5c6a; border-width: 0 2px 2px 0; font: 12px/19px "Liberation Sans", sans-serif; color: #505058; }
.tabs a { padding: 0 8px; border-left: 1px solid #5a5c6a; background: #b6bacd; }
.tabs a:nth-child(6) { padding: 0 15px; }
.tabs .on { padding: 0 8px 0 7px; background: #eff1f8; color: #333; font-weight: bold; }
.side { flex: 1; min-height: 0; display: flex; background: linear-gradient(#dfe2f0, #c6cade 30%, #b9bdd2); }
.views { width: 28px; height: 316px; display: flex; flex-direction: column; align-items: center; padding: 18px 0 0; background: linear-gradient(90deg, #f6f8ff, #dde0ef); border-bottom: 1px solid #9a9eb0; }
.views button { flex: none; height: 22px; display: flex; align-items: center; }
.views hr { width: 20px; margin: 1px 0 4px; border: 0; border-top: 1px solid #888; }
.panel { position: relative; flex: 1; min-width: 0; display: flex; flex-direction: column; border-right: 2px solid #5a5c74; background: #e0e3ec; border-top: 1px solid #8a8ca0; }
.ptabs { flex: none; display: flex; align-items: flex-end; height: 29px; background: #ced2e6; border-bottom: 1px solid #5a5c74; }
.ptabs button { width: 27px; height: 22px; margin-right: 1px; display: flex; align-items: center; justify-content: center; border: 1px solid #74789a; border-bottom: 0; border-radius: 3px 3px 0 0; background: #b4b8d0; }
.ptabs .on { background: #e8eaf4; }
.more { margin: 0 4px 4px auto; font-size: 16px; line-height: 16px; }
.filter { flex: none; display: flex; align-items: center; height: 18px; margin: 2px 1px 0; padding-left: 6px; border: 1px solid #5a5e74; border-radius: 9px; background: linear-gradient(#dfe2f2, #fff); }
.filter svg { width: 14px; height: 14px; }
.filter input { flex: 1; min-width: 0; }
.treebox { flex: 1; min-height: 0; display: flex; border-bottom: 2px solid #1c5aa8; }
.tree { flex: 1; margin: 0; padding: 2px 0 0; overflow: hidden; list-style: none; color: #111; font: 11px/18px "Noto Sans", sans-serif; }
.tree li { display: flex; align-items: center; height: 18px; }
.tree .ic { margin-right: 5px; }
.twig { position: relative; width: 21px; height: 18px; display: flex; align-items: center; padding-left: 6px; background: repeating-linear-gradient(#888 0 1px, #e0e3ec 1px 2px) 10px 0 / 1px 100% no-repeat, repeating-linear-gradient(90deg, #888 0 1px, #e0e3ec 1px 2px) 10px 9px / 9px 1px no-repeat; }
.tree li:last-child .twig { background-size: 1px 9px, 9px 1px; }
.plus { width: 9px; height: 9px; border: 1px solid #888; background: linear-gradient(#335, #335) center / 5px 1px no-repeat, linear-gradient(#335, #335) center / 1px 5px no-repeat, #fff; }
.vscroll { width: 14px; display: flex; flex-direction: column; align-items: center; padding: 8px 0 2px; background: #f0f0f2; }
.vscroll .thumb { flex: 1; width: 14px; display: flex; align-items: center; justify-content: center; margin: 127px 0 8px; border: 1px solid #999; background: linear-gradient(90deg, #f6f6f6, #c8cad0); }
.vscroll .thumb span { width: 7px; height: 8px; background: repeating-linear-gradient(#555 0 1px, #eee 1px 3px); }
.hscroll { flex: none; display: flex; align-items: center; height: 21px; padding: 0 20px 0 5px; background: #eef0f4; border-bottom: 1px solid #888; }
.hscroll .thumb { width: 104px; height: 15px; margin-left: 8px; display: flex; align-items: center; justify-content: center; border: 1px solid #999; border-radius: 2px; background: linear-gradient(#f8f8f8, #cdcfd6); }
.hscroll .thumb span { width: 8px; height: 7px; background: repeating-linear-gradient(90deg, #555 0 1px, #eee 1px 3px); }
i.lt { border: 3px solid transparent; border-right: 4px solid #333; border-left: 0; }
i.rt { border: 3px solid transparent; border-left: 4px solid #333; border-right: 0; margin-left: auto; }
.sheets { flex: none; display: flex; height: 16px; padding-left: 2px; background: #b6bacd; border: solid #333; border-width: 1px 0; font: 12px/14px "Liberation Sans", sans-serif; color: #222; }
.sheets .nav { width: 15px; margin-right: 1px; border: 1px solid #888ca4; color: #888ca4; font-size: 7px; line-height: 12px; }
.sheets a { padding: 0 8px; border-left: 1px solid #333; }
.sheets .on { margin-left: 2px; padding: 0 10px; background: #e8eaf4; font-weight: bold; }
.grip { position: absolute; z-index: 3; right: -10px; top: 435px; width: 11px; height: 29px; display: flex; flex-direction: column; align-items: center; justify-content: space-evenly; border: 1px solid #5a5c74; border-left: 0; border-radius: 0 4px 4px 0; background: #e4e6f2; }
.grip i { border: 3px solid transparent; border-right: 3px solid #44467a; border-left: 0; }

.view { flex: 1; min-width: 0; display: flex; flex-direction: column; border-right: 1px solid #666; }
.canvas { position: relative; flex: 1; min-height: 0; overflow: hidden; }
.canvas > svg { display: block; width: 100%; height: 100%; }
.edge { stroke: #062806; stroke-width: 1.5px; stroke-linejoin: round; }
.edge .line { fill: none; stroke-width: 1px; }
.edge .hi { fill: none; stroke: #48e048; stroke-width: 1px; }
.edge .thick { fill: none; stroke-width: 3px; }
.edge .tubeshade { fill: none; stroke: #009000; stroke-width: 10px; }
.edge .glare { fill: none; stroke: #90ff90; stroke-width: 5px; }
.origin { fill: #00f; stroke: #00f; stroke-width: 1px; }
.triad { stroke-width: 4px; font: 11px "Liberation Sans", sans-serif; }
.triad text, .triad path[fill] { stroke: none; }
.heads { position: absolute; top: 2px; left: calc(50% - 143px); display: flex; align-items: center; height: 20px; }
.heads .drop { width: 33px; }
.doctools { position: absolute; top: 5px; right: 6px; display: flex; align-items: center; color: #888c98; }
.taskpane { position: absolute; top: 58px; right: 0; width: 23px; }
.taskpane button { display: flex; align-items: center; width: 23px; height: 24px; padding-left: 4px; border: 1px solid #6a6e84; border-right: 0; border-radius: 4px 0 0 4px; background: #b6bacd; }
.taskpane .on { background: #f4f5fa; }
.viewname { position: absolute; left: 11px; bottom: 2px; margin: 0; color: #28284a; font: bold 12px/13px "DejaVu Sans Condensed", "DejaVu Sans", sans-serif; }
.strip { flex: none; height: 16px; border-top: 1px solid #000; background: #e0e3ea; }

.status { flex: none; display: flex; align-items: center; height: 19px; padding: 0 5px 0 2px; border-top: 1px solid #50525e; background: linear-gradient(#cdd0e2, #b6b9cd); color: #111; font: 11px/16px "Noto Sans", sans-serif; }
.cell { margin-left: auto; padding: 0 5px; border: solid #dfe1ec; border-width: 0 1px; }
.gap { width: 16px; height: 14px; border: solid #dfe1ec; border-width: 0 1px 0 0; }
.ips { margin: 0 20px 0 30px; }
.q { width: 13px; height: 13px; margin: 0 50px 0 18px; border: 1px solid #246; background: #fff; color: #0a9c24; font: bold 11px/11px "DejaVu Sans", sans-serif; }
```
